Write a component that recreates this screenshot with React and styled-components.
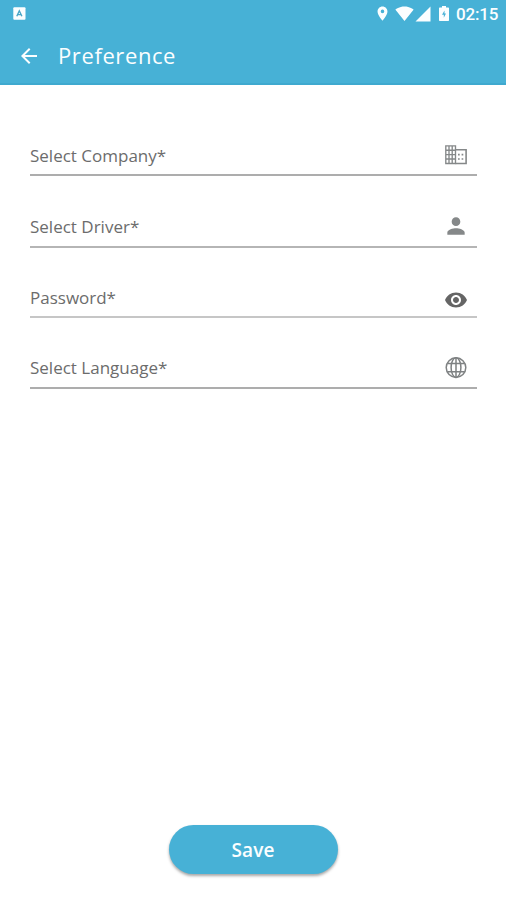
import React from "react";
import styled, { createGlobalStyle } from "styled-components";
import {
  MdArrowBack,
  MdLocationOn,
  MdPerson,
  MdSignalCellular4Bar,
  MdSignalWifi4Bar,
  MdVisibility,
} from "react-icons/md";

const GlobalStyle = createGlobalStyle`
  * {
    box-sizing: border-box;
  }

  body {
    margin: 0;
    background: #ffffff;
    font-family: "Open Sans", "Noto Sans", sans-serif;
  }
`;

const Screen = styled.div`
  display: flex;
  flex-direction: column;
  height: 900px;
`;

const Header = styled.header`
  height: 85px;
  background: #47b1d6;
  border-bottom: 2px solid #3fa9cf;
  color: #fbfeff;
`;

const StatusBar = styled.div`
  display: flex;
  justify-content: space-between;
  align-items: center;
  height: 27px;
  padding: 0 8px 0 13px;
`;

const StatusIcons = styled.div`
  display: flex;
  align-items: center;

  svg {
    display: block;
  }
`;

const Signals = styled.div`
  display: flex;
  align-items: center;
  margin: 0 7px 0 4px;
`;

const Clock = styled.span`
  width: 42px;
  margin-left: 7px;
  padding-top: 1px;
  font-family: Roboto, sans-serif;
  font-size: 17px;
  font-weight: 500;
  letter-spacing: -0.15px;
  line-height: 27px;
  white-space: nowrap;
`;

const TitleBar = styled.div`
  display: flex;
  align-items: center;
  height: 57px;
  padding-left: 17px;
`;

const Title = styled.h1`
  margin: 0 0 2px 17px;
  font-size: 22px;
  font-weight: 400;
  letter-spacing: 0.6px;
  line-height: 54px;
`;

const Form = styled.main`
  flex: 1;
  display: flex;
  flex-direction: column;
  padding: 50px 29px 0 30px;
`;

const Field = styled.div`
  display: flex;
  justify-content: space-between;
  align-items: center;
  height: ${(props) => props.$height}px;
  padding: ${(props) => props.$top}px 8px 0 0;
  border-bottom: 2px solid ${(props) => props.$line};
`;

const Label = styled.span`
  color: #6c6c6c;
  font-size: 17px;
  letter-spacing: 0;
  line-height: 24px;
`;

const FieldIcon = styled.span`
  display: flex;
  justify-content: center;
  width: 26px;
  margin-top: ${(props) => props.$shift}px;
  color: ${(props) => props.$color};
`;

const Footer = styled.footer`
  display: flex;
  justify-content: center;
  padding-bottom: 26px;
`;

const SaveButton = styled.button`
  width: 169px;
  height: 49px;
  padding: 0;
  border: 0;
  border-radius: 25px;
  background: #47b1d6;
  box-shadow: 0 2px 3px rgba(0, 0, 0, 0.35);
  color: #fbfeff;
  font-family: inherit;
  font-size: 19px;
  font-weight: 650;
  letter-spacing: 0.1px;
`;

function AppBadge() {
  return (
    <svg width="13" height="13" viewBox="0 0 13 13">
      <rect x="0.3" y="0.3" width="12.2" height="12.4" rx="1" fill="#fbfeff" />
      <path
        d="M3.8 9.3 6.3 3.8 8.9 9.3M4.8 7.6h3.2"
        fill="none"
        stroke="#47a5c6"
        strokeWidth="1.4"
      />
    </svg>
  );
}

function Battery() {
  return (
    <svg width="10" height="15" viewBox="0 0 10 15">
      <path d="M3 0h4v1.5h2.3q.7 0 .7.7v12.1q0 .7-.7.7H.7q-.7 0-.7-.7V2.2q0-.7.7-.7H3z" fill="currentColor" />
      <path d="M5.5 4.5 3 8.8h1.8v3L7 7.6H5.5z" fill="#47b1d6" />
    </svg>
  );
}

// tower with a window grid and a low annex on its right
function Building() {
  return (
    <svg width="22" height="20" viewBox="0 0 22 20" fill="none" stroke="currentColor">
      <path d="M.8.8h9.7v17.7H.8zM4 .8v17.7M7.2.8v17.7M.8 5.2h9.7M.8 9.6h9.7M.8 14h9.7" strokeWidth="1.35" />
      <path d="M10.5 4.7h10.6v13.8H10.5" strokeWidth="1.6" />
      <path d="M13 9.6h1.7M16.6 9.6h1.7M13 14h1.7M16.6 14h1.7" strokeWidth="1.6" />
    </svg>
  );
}

function Globe() {
  return (
    <svg
      width="22"
      height="22"
      viewBox="0 0 22 22"
      fill="none"
      stroke="currentColor"
      strokeWidth="1.5"
    >
      <circle cx="11" cy="10.6" r="9.8" />
      <ellipse cx="11" cy="10.6" rx="4.9" ry="9.8" />
      <path d="M11 .8v19.6M2.4 6.4h17.2M2.4 14.8h17.2" />
    </svg>
  );
}

const fields = [
  { label: "Select Company*", icon: <Building />, height: 41, top: 3, shift: -2, color: "#858889", line: "#adadad" },
  { label: "Select Driver*", icon: <MdPerson size={26} />, height: 72, top: 31, shift: -2, color: "#858889", line: "#b5b5b5" },
  { label: "Password*", icon: <MdVisibility size={24} />, height: 70, top: 31, shift: 4, color: "#656565", line: "#c6c6c6" },
  { label: "Select Language*", icon: <Globe />, height: 71, top: 31, shift: -1, color: "#7f8283", line: "#adadad" },
];

function App() {
  return (
    <Screen>
      <GlobalStyle />
      <Header>
        <StatusBar>
          <AppBadge />
          <StatusIcons>
            <MdLocationOn size={17} />
            <Signals>
              <MdSignalWifi4Bar size={19} />
              <MdSignalCellular4Bar size={18} />
            </Signals>
            <Battery />
            <Clock>02:15</Clock>
          </StatusIcons>
        </StatusBar>
        <TitleBar>
          <MdArrowBack size={24} />
          <Title>Preference</Title>
        </TitleBar>
      </Header>
      <Form>
        {fields.map((field) => (
          <Field key={field.label} $height={field.height} $top={field.top} $line={field.line}>
            <Label>{field.label}</Label>
            <FieldIcon $shift={field.shift} $color={field.color}>
              {field.icon}
            </FieldIcon>
          </Field>
        ))}
      </Form>
      <Footer>
        <SaveButton>Save</SaveButton>
      </Footer>
    </Screen>
  );
}

export default App;
